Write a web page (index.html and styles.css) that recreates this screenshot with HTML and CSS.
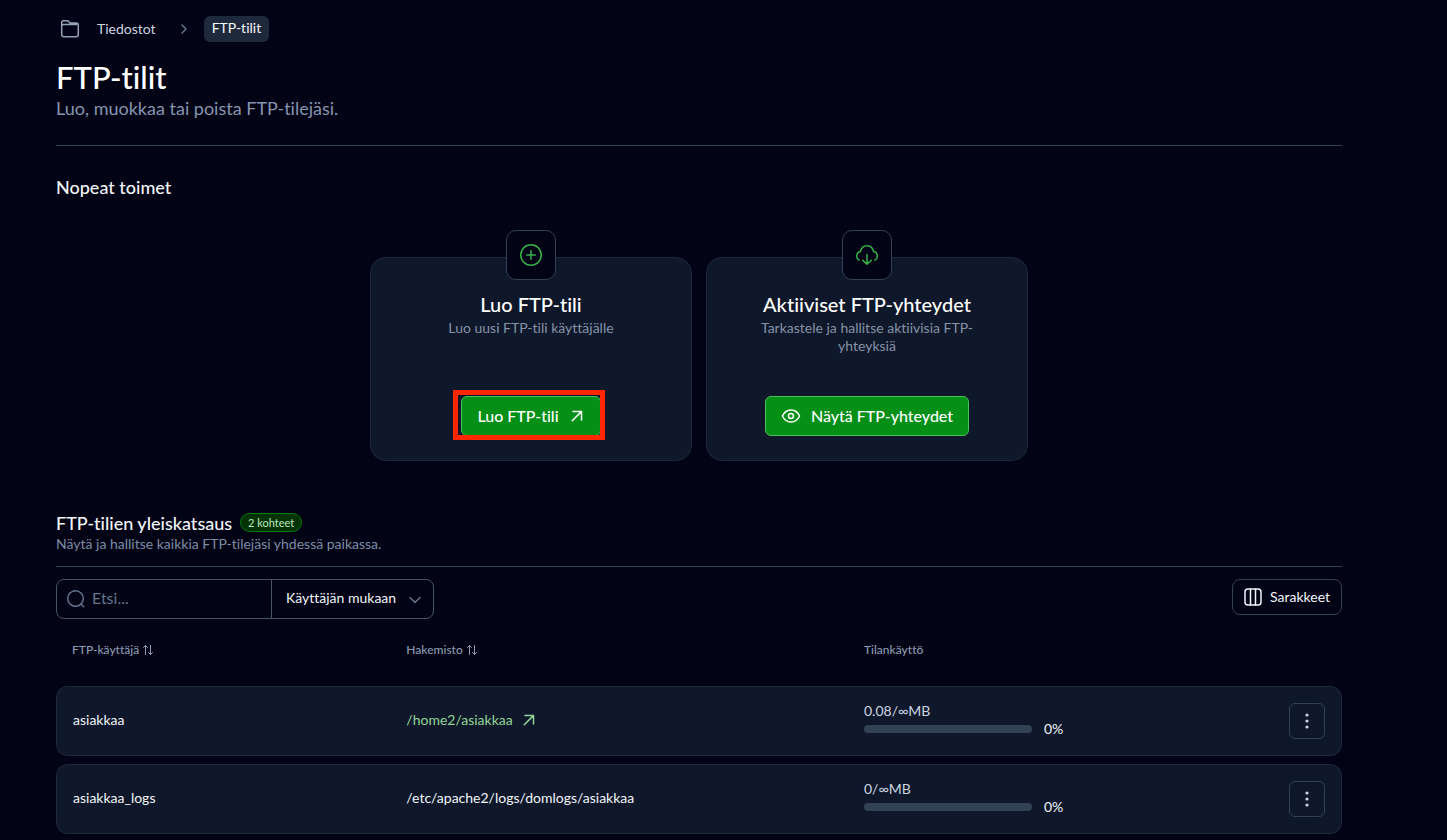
FILE: index.html
```html
<!DOCTYPE html>
<html lang="fi">

<head>
	<meta charset="UTF-8">
	<meta name="viewport" content="width=device-width, initial-scale=1">
	<title>FTP-tilit</title>
	<link rel="stylesheet" href="styles.css">
</head>

<body>
	<main class="page">
		<nav class="breadcrumb">
			<svg class="icon folder" width="20" height="20" viewBox="0 0 20 20"><path d="M1.7 7V3.6Q1.7 1.7 3.6 1.7H7.2Q8.3 1.7 8.9 2.6L9.7 4H16.2Q18.3 4 18.3 6.1V15.5Q18.3 17.8 16 17.8H4Q1.7 17.8 1.7 15.5V7Q1.7 5.4 3.6 5.4H16.5" /></svg>
			<a href="#">Tiedostot</a>
			<svg class="icon arrow" width="8" height="12" viewBox="0 0 8 12"><path d="M2 2l4 4-4 4" /></svg>
			<a href="#" class="current">FTP-tilit</a>
		</nav>

		<header class="page-header">
			<h1>FTP-tilit</h1>
			<p>Luo, muokkaa tai poista FTP-tilejäsi.</p>
		</header>

		<section class="actions">
			<h2>Nopeat toimet</h2>
			<div class="cards">
				<div class="card">
					<div class="card-icon">
						<svg class="icon" width="24" height="24" viewBox="0 0 24 24"><circle cx="12" cy="12" r="10.2" /><path d="M12 7.8v8.4M7.8 12h8.4" /></svg>
					</div>
					<h3>Luo FTP-tili</h3>
					<p>Luo uusi FTP-tili käyttäjälle</p>
					<div class="marked">
						<button type="button" class="btn">
							Luo FTP-tili
							<svg class="icon" width="16" height="16" viewBox="0 0 16 16"><path d="M3.2 12.8l9.2-9.2M4 3.5h8.5V12" /></svg>
						</button>
					</div>
				</div>
				<div class="card">
					<div class="card-icon">
						<svg class="icon" width="24" height="24" viewBox="0 0 24 24"><path d="M4 17.1C2.5 16.3 1.7 14.9 1.7 13.2c0-2.3 1.5-4.2 3.7-4.6C6.2 5.1 8.5 2.7 12 2.7s5.8 2.4 6.6 5.9c2.2.4 3.7 2.3 3.7 4.6 0 1.7-.8 3.1-2.3 3.9M12 11.5v9.4M7.7 17.3l4.3 3.8 4.3-3.8" /></svg>
					</div>
					<h3>Aktiiviset FTP-yhteydet</h3>
					<p>Tarkastele ja hallitse aktiivisia FTP-yhteyksiä</p>
					<button type="button" class="btn">
						<svg class="icon" width="20" height="20" viewBox="0 0 20 20"><path d="M1.4 10C3.3 6.1 6.4 4 10 4s6.7 2.1 8.6 6c-1.9 3.9-5 6-8.6 6s-6.7-2.1-8.6-6z" /><circle cx="10" cy="10" r="2.5" /></svg>
						Näytä FTP-yhteydet
					</button>
				</div>
			</div>
		</section>

		<section class="overview">
			<header class="overview-header">
				<div class="heading">
					<h2>FTP-tilien yleiskatsaus</h2>
					<span class="badge">2 kohteet</span>
				</div>
				<p>Näytä ja hallitse kaikkia FTP-tilejäsi yhdessä paikassa.</p>
			</header>

			<div class="toolbar">
				<form class="search">
					<label class="search-box">
						<svg class="icon" width="20" height="20" viewBox="0 0 20 20"><circle cx="9.5" cy="9.5" r="7.8" /><path d="M15 15l2.7 2.7" /></svg>
						<input type="text" placeholder="Etsi..." aria-label="Etsi">
					</label>
					<div class="filter">
						<select aria-label="Suodatin">
							<option>Käyttäjän mukaan</option>
							<option>Hakemiston mukaan</option>
						</select>
						<svg class="icon" width="12" height="8" viewBox="0 0 12 8"><path d="M1 1.5l5 5 5-5" /></svg>
					</div>
				</form>
				<button type="button" class="columns">
					<svg class="icon" width="18" height="18" viewBox="0 0 18 18"><rect x="1" y="1" width="16" height="16" rx="3" /><path d="M6.5 1v16M11.5 1v16" /></svg>
					Sarakkeet
				</button>
			</div>

			<table class="accounts">
				<colgroup>
					<col class="col-user">
					<col>
					<col class="col-usage">
					<col class="col-menu">
				</colgroup>
				<thead>
					<tr>
						<th>FTP-käyttäjä <svg class="icon sort" width="12" height="12" viewBox="0 0 12 12"><path d="M3.5 10.5V1.5M1.5 3.5l2-2 2 2M8.5 1.5v9M6.5 8.5l2 2 2-2" /></svg></th>
						<th>Hakemisto <svg class="icon sort" width="12" height="12" viewBox="0 0 12 12"><path d="M3.5 10.5V1.5M1.5 3.5l2-2 2 2M8.5 1.5v9M6.5 8.5l2 2 2-2" /></svg></th>
						<th>Tilankäyttö</th>
						<th></th>
					</tr>
				</thead>
				<tbody>
					<tr>
						<td>asiakkaa</td>
						<td>
							<a href="#" class="dir">/home2/asiakkaa
								<svg class="icon" width="16" height="16" viewBox="0 0 16 16"><path d="M3.2 12.8l9.2-9.2M4 3.5h8.5V12" /></svg>
							</a>
						</td>
						<td>
							<div class="quota">0.08/∞MB</div>
							<div class="usage"><span class="bar"></span>0%</div>
						</td>
						<td>
							<button type="button" class="menu" aria-label="Toiminnot">
								<svg width="4" height="16" viewBox="0 0 4 16"><circle cx="2" cy="2" r="1.6" /><circle cx="2" cy="8" r="1.6" /><circle cx="2" cy="14" r="1.6" /></svg>
							</button>
						</td>
					</tr>
					<tr>
						<td>asiakkaa_logs</td>
						<td>/etc/apache2/logs/domlogs/asiakkaa</td>
						<td>
							<div class="quota">0/∞MB</div>
							<div class="usage"><span class="bar"></span>0%</div>
						</td>
						<td>
							<button type="button" class="menu" aria-label="Toiminnot">
								<svg width="4" height="16" viewBox="0 0 4 16"><circle cx="2" cy="2" r="1.6" /><circle cx="2" cy="8" r="1.6" /><circle cx="2" cy="14" r="1.6" /></svg>
							</button>
						</td>
					</tr>
				</tbody>
			</table>
		</section>
	</main>
</body>

</html>
```
FILE: styles.css
```css
* {
	margin: 0;
	padding: 0;
	box-sizing: border-box;
}

body {
	background: #020314;
	color: #f1f5f9;
	font-family: Lato, "Liberation Sans", sans-serif;
	font-size: 14px;
	font-variant-ligatures: none;
	line-height: 20px;
}

a {
	color: inherit;
	text-decoration: none;
}

button,
input,
select {
	font: inherit;
	font-variant-ligatures: none;
	color: inherit;
	background: none;
	border: none;
	outline: none;
}

h1,
h2,
h3 {
	font-weight: 500;
}

h2 {
	font-size: 18px;
	line-height: 22px;
}

.icon {
	fill: none;
	stroke: currentColor;
	stroke-width: 1.5;
	stroke-linecap: round;
	stroke-linejoin: round;
	flex: none;
}

.page {
	padding: 16px 105px 0 56px;
}

/* breadcrumb */
.breadcrumb {
	display: flex;
	align-items: center;
	height: 26px;
	padding-left: 4px;
	color: #cbd5e1;
}

.folder {
	color: #94a3b8;
	margin-right: 17px;
}

.arrow {
	color: #64748b;
	margin: 0 16px 0 24px;
}

.current {
	padding: 2px 8px 4px;
	border-radius: 6px;
	background: #1e293b;
	color: #f8fafc;
}

/* title */
.page-header {
	padding: 16px 0 24px;
	border-bottom: 1px solid #334155;
}

.page-header h1 {
	font-size: 31px;
	line-height: 38px;
	color: #fff;
}

.page-header p {
	font-size: 18px;
	line-height: 25px;
	color: #8695b0;
}

/* cards */
.actions {
	padding-top: 30px;
}

.cards {
	display: flex;
	justify-content: center;
	gap: 14px;
	padding-top: 59px;
}

.card {
	display: flex;
	flex-direction: column;
	align-items: center;
	width: 322px;
	min-height: 204px;
	padding: 0 48px 24px;
	border: 1px solid #1e293b;
	border-radius: 16px;
	background: #0f172a;
	text-align: center;
}

.card-icon {
	display: flex;
	align-items: center;
	justify-content: center;
	width: 50px;
	height: 50px;
	margin-top: -28px;
	border: 1px solid #334155;
	border-radius: 10px;
	background: #020314;
	color: #37b34a;
}

.card h3 {
	margin-top: 12px;
	font-size: 20px;
	line-height: 24px;
	color: #fff;
}

.card p {
	margin-bottom: auto;
	padding-top: 3px;
	line-height: 18px;
	color: #8593a8;
}

.btn {
	display: flex;
	align-items: center;
	gap: 10px;
	height: 40px;
	padding: 0 15px;
	border: 1px solid #4cc25a;
	border-radius: 6px;
	background: #048f17;
	color: #fff;
	font-size: 16px;
	font-weight: 500;
}

.marked {
	position: relative;
}

.marked::after {
	content: "";
	position: absolute;
	top: -6px;
	right: -4px;
	bottom: -4px;
	left: -8px;
	border: 5px solid #ff2600;
	pointer-events: none;
}

/* overview */
.overview {
	padding-top: 50px;
}

.overview-header {
	padding-bottom: 12px;
	border-bottom: 1px solid #334155;
}

.overview-header p {
	color: #7d8ca6;
}

.heading {
	display: flex;
	align-items: center;
	gap: 8px;
	height: 23px;
}

.badge {
	height: 19px;
	padding: 0 7px;
	border: 1px solid #047a0c;
	border-radius: 10px;
	background: #033303;
	color: #bbe8bf;
	font-size: 11px;
	line-height: 17px;
}

.toolbar {
	display: flex;
	align-items: flex-start;
	justify-content: space-between;
	padding-top: 12px;
}

.search {
	display: flex;
	width: 378px;
	height: 40px;
	border: 1px solid #475569;
	border-radius: 8px;
}

.search-box {
	display: flex;
	flex: 1;
	align-items: center;
	gap: 6px;
	padding-left: 9px;
	color: #64748b;
}

.search-box input {
	width: 100%;
	padding-bottom: 2px;
	font-size: 16px;
}

.search-box input::placeholder {
	color: #64748b;
}

.filter {
	position: relative;
	width: 162px;
	border-left: 1px solid #475569;
}

.filter select {
	width: 100%;
	height: 100%;
	padding: 0 0 2px 14px;
	appearance: none;
}

.filter .icon {
	position: absolute;
	top: 16px;
	right: 12px;
	color: #64748b;
	pointer-events: none;
}

.columns {
	display: flex;
	align-items: center;
	gap: 8px;
	height: 36px;
	padding: 0 11px;
	border: 1px solid #334155;
	border-radius: 8px;
}

/* accounts */
.accounts {
	width: 100%;
	table-layout: fixed;
	border-collapse: separate;
	border-spacing: 0 8px;
}

.col-user {
	width: 26%;
}

.col-usage {
	width: 425px;
}

.col-menu {
	width: 69px;
}

.accounts th {
	padding: 15px 16px 20px;
	font-size: 12px;
	font-weight: 500;
	line-height: 16px;
	text-align: left;
	color: #8d9bb2;
}

.sort {
	vertical-align: -2px;
	stroke-width: 1;
}

.accounts td {
	height: 70px;
	padding: 0 16px 2px;
	border: solid #1e293b;
	border-width: 1px 0;
	background: #0f172a;
}

.accounts td:first-child {
	border-left-width: 1px;
	border-radius: 12px 0 0 12px;
}

.accounts td:last-child {
	padding-bottom: 0;
	border-right-width: 1px;
	border-radius: 0 12px 12px 0;
}

.dir {
	display: flex;
	align-items: center;
	gap: 8px;
	color: #93d696;
}

.quota {
	line-height: 18px;
	color: #cbd5e1;
}

.usage {
	display: flex;
	align-items: center;
	gap: 12px;
	line-height: 18px;
}

.bar {
	width: 168px;
	height: 8px;
	border-radius: 4px;
	background: #334155;
}

.menu {
	display: flex;
	align-items: center;
	justify-content: center;
	width: 36px;
	height: 36px;
	border: 1px solid #334155;
	border-radius: 6px;
}

.menu svg {
	fill: #cbd5e1;
}
```
